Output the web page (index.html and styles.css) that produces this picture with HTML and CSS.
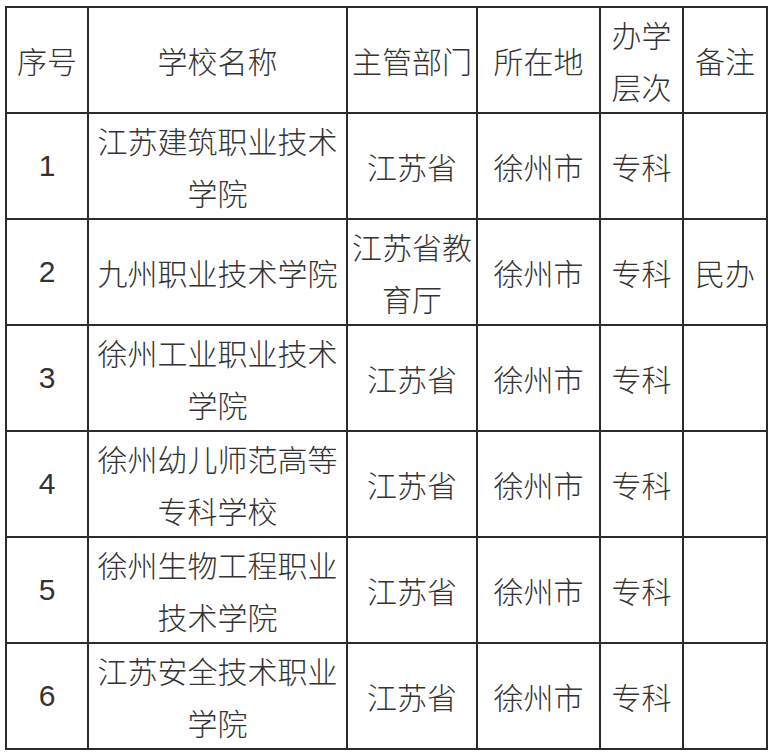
FILE: index.html
```html
<!DOCTYPE html>
<html lang="zh">
<head>
<meta charset="utf-8">
<link rel="stylesheet" href="styles.css">
</head>
<body>
<table class="tbl">
  <colgroup>
    <col class="c1"><col class="c2"><col class="c3"><col class="c4"><col class="c5"><col class="c6">
  </colgroup>
  <tr><td>序号</td><td>学校名称</td><td>主管部门</td><td>所在地</td><td>办学<br>层次</td><td>备注</td></tr>
  <tr><td class="num">1</td><td>江苏建筑职业技术<br>学院</td><td>江苏省</td><td>徐州市</td><td>专科</td><td></td></tr>
  <tr><td class="num">2</td><td>九州职业技术学院</td><td>江苏省教<br>育厅</td><td>徐州市</td><td>专科</td><td>民办</td></tr>
  <tr><td class="num">3</td><td>徐州工业职业技术<br>学院</td><td>江苏省</td><td>徐州市</td><td>专科</td><td></td></tr>
  <tr><td class="num">4</td><td>徐州幼儿师范高等<br>专科学校</td><td>江苏省</td><td>徐州市</td><td>专科</td><td></td></tr>
  <tr><td class="num">5</td><td>徐州生物工程职业<br>技术学院</td><td>江苏省</td><td>徐州市</td><td>专科</td><td></td></tr>
  <tr><td class="num">6</td><td>江苏安全技术职业<br>学院</td><td>江苏省</td><td>徐州市</td><td>专科</td><td></td></tr>
</table>
</body>
</html>
```
FILE: styles.css
```css
html, body { margin: 0; padding: 0; background: #fff; }
body { padding: 6px 0 0 5px; }
.tbl {
  border-collapse: collapse;
  table-layout: fixed;
  width: 761px;
  font-family: "Noto Sans CJK SC", "Noto Sans", sans-serif;
  font-weight: 300;
  font-size: 30px;
  color: #333;
}
.c1 { width: 82px; }
.c2 { width: 259px; }
.c3 { width: 130px; }
.c4 { width: 123px; }
.c5 { width: 83px; }
.c6 { width: 84px; }
.tbl td {
  border: 2px solid #2c2c2c;
  height: 104px;
  padding: 0;
  text-align: center;
  vertical-align: middle;
  line-height: 52px;
}
.tbl td.num { font-family: "Liberation Sans", sans-serif; font-weight: 400; }
```
